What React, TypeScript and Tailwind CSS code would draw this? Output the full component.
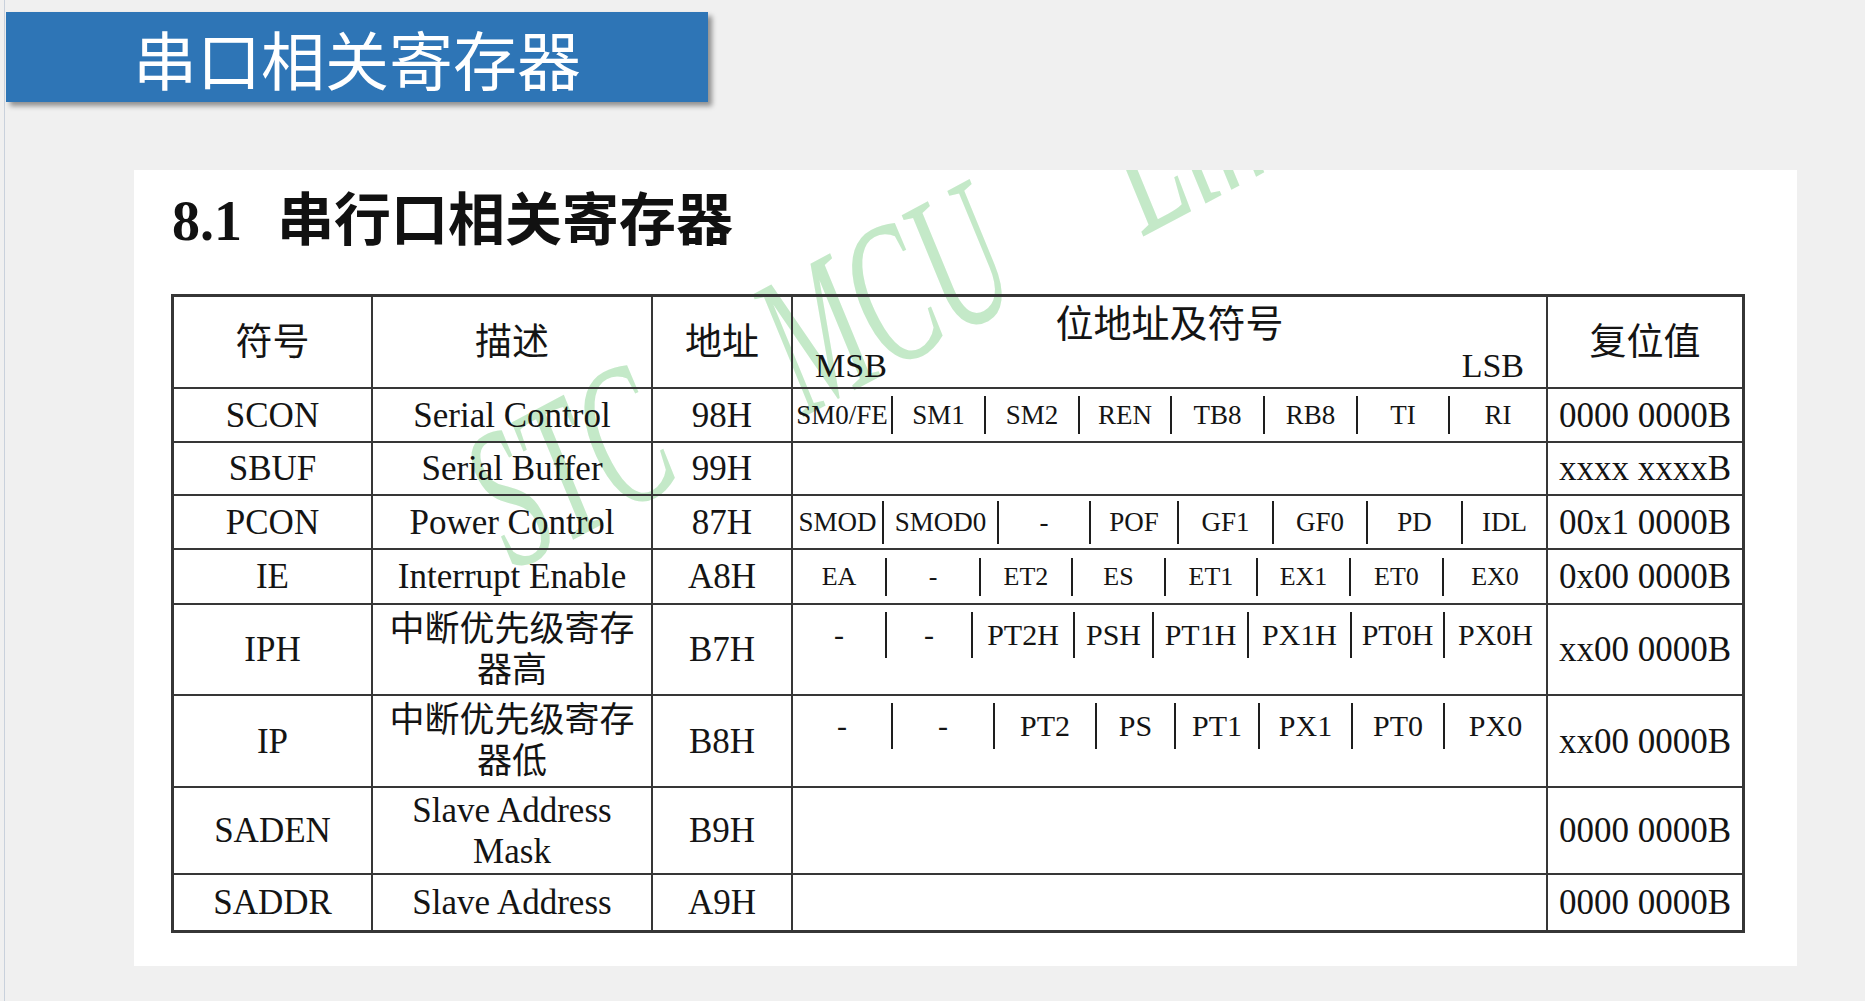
import React from "react";

type Bits = { labels: string[]; seps: number[]; bar: string; size: string };

type Row = {
  sym: string;
  desc: string;
  addr: string;
  reset: string;
  h: string;
  bits?: Bits;
  top?: boolean;
  last?: boolean;
};

// content box of the bit column, in page px
const BIT_START = 793;
const BIT_END = 1546;

const segWidths = (seps: number[]) => {
  const pts = [BIT_START, ...seps, BIT_END];
  return pts.slice(1).map((p, i) => p - pts[i]);
};

const ROWS: Row[] = [
  {
    sym: "SCON",
    desc: "Serial Control",
    addr: "98H",
    reset: "0000 0000B",
    h: "h-[54px]",
    bits: {
      labels: ["SM0/FE", "SM1", "SM2", "REN", "TB8", "RB8", "TI", "RI"],
      seps: [893, 986, 1080, 1172, 1265, 1358, 1450],
      bar: "h-[38px]",
      size: "text-[27px]",
    },
  },
  { sym: "SBUF", desc: "Serial Buffer", addr: "99H", reset: "xxxx xxxxB", h: "h-[53px]" },
  {
    sym: "PCON",
    desc: "Power Control",
    addr: "87H",
    reset: "00x1 0000B",
    h: "h-[54px]",
    bits: {
      labels: ["SMOD", "SMOD0", "-", "POF", "GF1", "GF0", "PD", "IDL"],
      seps: [884, 999, 1091, 1179, 1274, 1368, 1463],
      bar: "h-[43px]",
      size: "text-[27px]",
    },
  },
  {
    sym: "IE",
    desc: "Interrupt Enable",
    addr: "A8H",
    reset: "0x00 0000B",
    h: "h-[55px]",
    bits: {
      labels: ["EA", "-", "ET2", "ES", "ET1", "EX1", "ET0", "EX0"],
      seps: [887, 981, 1073, 1166, 1258, 1351, 1444],
      bar: "h-[38px]",
      size: "text-[26px]",
    },
  },
  {
    sym: "IPH",
    desc: "中断优先级寄存器高",
    addr: "B7H",
    reset: "xx00 0000B",
    h: "h-[91px]",
    top: true,
    bits: {
      labels: ["-", "-", "PT2H", "PSH", "PT1H", "PX1H", "PT0H", "PX0H"],
      seps: [887, 973, 1075, 1154, 1249, 1352, 1445],
      bar: "h-[46px]",
      size: "text-[30px]",
    },
  },
  {
    sym: "IP",
    desc: "中断优先级寄存器低",
    addr: "B8H",
    reset: "xx00 0000B",
    h: "h-[92px]",
    top: true,
    bits: {
      labels: ["-", "-", "PT2", "PS", "PT1", "PX1", "PT0", "PX0"],
      seps: [893, 995, 1097, 1176, 1260, 1353, 1445],
      bar: "h-[46px]",
      size: "text-[30px]",
    },
  },
  { sym: "SADEN", desc: "Slave Address Mask", addr: "B9H", reset: "0000 0000B", h: "h-[87px]" },
  { sym: "SADDR", desc: "Slave Address", addr: "A9H", reset: "0000 0000B", h: "h-[55px]", last: true },
];

const LINE = "border-[#363636]";

function BitStrip({ bits }: { bits: Bits }) {
  const w = segWidths(bits.seps);
  return (
    <div className={`flex ${bits.size} leading-none`}>
      {bits.labels.map((label, i) => (
        <div
          key={i}
          style={{ width: w[i] }}
          className={`flex ${bits.bar} shrink-0 items-center justify-center ${
            i < bits.labels.length - 1 ? "border-r-2 border-[#1e1e1e]" : ""
          }`}
        >
          {label}
        </div>
      ))}
    </div>
  );
}

function TableRow({ row }: { row: Row }) {
  return (
    <div
      className={`grid grid-cols-[199px_280px_140px_755px_194px] ${row.h} ${
        row.last ? "" : `border-b-2 ${LINE}`
      }`}
    >
      <div className={`flex items-center justify-center border-r-2 ${LINE}`}>{row.sym}</div>
      <div className={`flex items-center justify-center border-r-2 ${LINE} px-[8px] text-center leading-[41px]`}>
        {row.desc}
      </div>
      <div className={`flex items-center justify-center border-r-2 ${LINE}`}>{row.addr}</div>
      <div className={`flex border-r-2 ${LINE} ${row.top ? "items-start pt-[7px]" : "items-center"}`}>
        {row.bits && <BitStrip bits={row.bits} />}
      </div>
      <div className="flex items-center justify-center">{row.reset}</div>
    </div>
  );
}

export default function App() {
  return (
    <div className="min-h-screen bg-[#f0f0f0] pl-[4px]">
      <div className="min-h-screen border-l border-[#c9d1dc] pt-[12px] pb-[35px]">
        {/* slide title */}
        <div className="ml-[1px] flex h-[90px] w-[702px] items-center justify-center bg-[#2e75b6] font-['Noto_Sans_CJK_SC',sans-serif] text-[64px] leading-none text-white shadow-[4px_4px_5px_rgba(0,0,0,0.4)]">
          串口相关寄存器
        </div>

        {/* pasted datasheet page */}
        <div className="relative ml-[129px] mt-[68px] h-[796px] w-[1663px] overflow-hidden bg-white">
          {/* watermark */}
          <div className="pointer-events-none absolute left-[396px] top-[228px] origin-bottom-left rotate-[-28deg] scale-x-[0.56] whitespace-nowrap font-['Liberation_Serif',serif] text-[202px] italic leading-none text-[#c4e9c8] [word-spacing:188px]">
            STC MCU Limited
          </div>

          <div className="relative">
            <div className="ml-[38px] mt-[17px] flex h-[60px] items-baseline text-[#111]">
              <span className="font-['Liberation_Serif',serif] text-[56px] font-bold leading-none">8.1</span>
              <span className="ml-[35px] font-['Noto_Sans_CJK_SC',sans-serif] text-[57px] font-bold leading-none">
                串行口相关寄存器
              </span>
            </div>

            <div
              className={`ml-[37px] mt-[47px] w-[1574px] border-[3px] ${LINE} font-['Liberation_Serif','Noto_Sans_CJK_SC',serif] text-[35px] leading-none text-[#141414]`}
            >
              <div className={`grid h-[92px] grid-cols-[199px_280px_140px_755px_194px] border-b-2 ${LINE}`}>
                <div className={`flex items-center justify-center border-r-2 ${LINE} text-[37px]`}>符号</div>
                <div className={`flex items-center justify-center border-r-2 ${LINE} text-[37px]`}>描述</div>
                <div className={`flex items-center justify-center border-r-2 ${LINE} text-[37px]`}>地址</div>
                <div className={`flex flex-col justify-between border-r-2 ${LINE} px-[22px] pt-[8px] pb-[4px]`}>
                  <div className="text-center text-[38px]">位地址及符号</div>
                  <div className="flex justify-between text-[34px]">
                    <span>MSB</span>
                    <span>LSB</span>
                  </div>
                </div>
                <div className="flex items-center justify-center text-[37px]">复位值</div>
              </div>
              {ROWS.map((r) => (
                <TableRow key={r.sym} row={r} />
              ))}
            </div>
          </div>
        </div>
      </div>
    </div>
  );
}
